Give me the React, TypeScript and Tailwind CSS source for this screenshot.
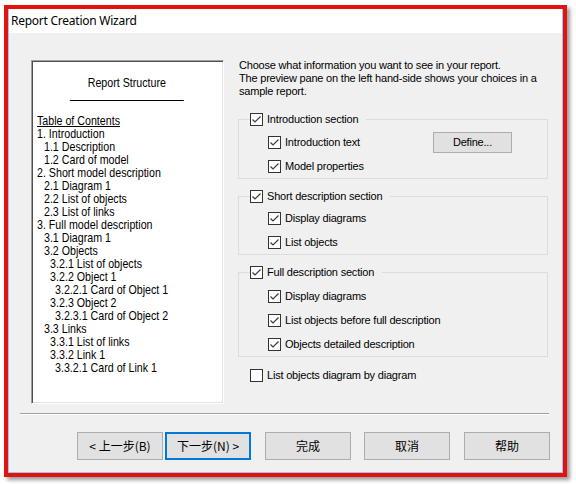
import React from 'react';

const toc = [
  { text: 'Table of Contents', level: 0, underline: true },
  { text: '1. Introduction', level: 0 },
  { text: '1.1 Description', level: 1 },
  { text: '1.2 Card of model', level: 1 },
  { text: '2. Short model description', level: 0 },
  { text: '2.1 Diagram 1', level: 1 },
  { text: '2.2 List of objects', level: 1 },
  { text: '2.3 List of links', level: 1 },
  { text: '3. Full model description', level: 0 },
  { text: '3.1 Diagram 1', level: 1 },
  { text: '3.2 Objects', level: 1 },
  { text: '3.2.1 List of objects', level: 2 },
  { text: '3.2.2 Object 1', level: 2 },
  { text: '3.2.2.1 Card of Object 1', level: 3 },
  { text: '3.2.3 Object 2', level: 2 },
  { text: '3.2.3.1 Card of Object 2', level: 3 },
  { text: '3.3 Links', level: 1 },
  { text: '3.3.1 List of links', level: 2 },
  { text: '3.3.2 Link 1', level: 2 },
  { text: '3.3.2.1 Card of Link 1', level: 3 },
];

// indents are in the unscaled space of the preview text (scaled by 0.82)
const indents = ['pl-0', 'pl-[8.5px]', 'pl-[16px]', 'pl-[22px]'];

function Box({ checked }: { checked: boolean }) {
  return (
    <span className="w-[13px] h-[13px] border border-[#333333] bg-white flex items-center justify-center shrink-0">
      {checked && (
        <svg width="11" height="11" viewBox="0 0 11 11">
          <path d="M1.5 5.5 L4 8 L9.5 2.5" fill="none" stroke="#3c3c3c" strokeWidth="1.2" />
        </svg>
      )}
    </span>
  );
}

function Check({ label, checked = true }: { label: string; checked?: boolean }) {
  return (
    <label className="flex items-center gap-[4px] h-[13px] leading-[13px] whitespace-nowrap">
      <Box checked={checked} />
      <span>{label}</span>
    </label>
  );
}

function Row({ children }: { children: React.ReactNode }) {
  return <div className="h-[24px] flex items-center">{children}</div>;
}

export default function App() {
  const btn =
    "h-[28px] w-[86px] bg-[#e1e1e1] border border-[#adadad] text-[12px] text-black flex items-center justify-center";

  return (
    <div className="w-[576px] h-[484px] bg-white pt-[5px] pl-[4px] font-['Noto_Sans_CJK_SC',sans-serif]">
      <div className="w-[563px] h-[472px] border-4 border-[#e2120e] shadow-[3px_3px_4px_rgba(0,0,0,0.4)] flex flex-col">
        <div className="flex-1 flex flex-col border-x border-b border-[#9cc4ee]">
          {/* Title bar */}
          <div className="h-[24px] bg-white flex items-center pl-[2px] text-[12px] tracking-[-0.25px] text-black font-['Noto_Sans',sans-serif]">
            Report Creation Wizard
          </div>

          {/* Body */}
          <div className="flex-1 bg-[#f0f0f0] pt-[26px] text-black">
            <div className="flex items-start pl-[22px] gap-[14px]">
              {/* Preview pane */}
              <div className="mt-[1px] w-[193px] h-[344px] overflow-hidden bg-white border border-t-[#a0a0a0] border-l-[#a0a0a0] border-r-white border-b-white shadow-[inset_1px_1px_0_#505050,inset_-1px_-1px_0_#e3e3e3] pl-[5px] pt-[15px]">
                <div className="w-[219px] origin-top-left scale-x-[0.82] text-[13px] leading-[13px] font-['Liberation_Sans',sans-serif]">
                  <div className="text-center">Report Structure</div>
                  <div className="mt-[11px] mx-auto w-[139px] h-px bg-black" />
                  <div className="mt-[13px]">
                    {toc.map((item, i) => (
                      <div key={i} className={`h-[13px] whitespace-nowrap ${indents[item.level]}`}>
                        <span className={item.underline ? 'underline' : ''}>{item.text}</span>
                      </div>
                    ))}
                  </div>
                </div>
              </div>

              {/* Options */}
              <div className="w-[310px] text-[11px] leading-[13px] tracking-[-0.2px] font-['Liberation_Sans',sans-serif]">
                <p className="pl-[1px]">
                  Choose what information you want to see in your report.
                  <br />
                  The preview pane on the left hand-side shows your choices in a
                  <br />
                  sample report.
                </p>

                <fieldset className="mt-[15px] border border-[#dcdcdc]">
                  <legend className="ml-[11px] pr-[8px]">
                    <Check label="Introduction section" />
                  </legend>
                  <div className="pt-[4px] pl-[29px]">
                    <Row>
                      <Check label="Introduction text" />
                      <button className="ml-auto mr-[35px] w-[79px] h-[21px] bg-[#e1e1e1] border border-[#adadad] text-[11px]">
                        Define...
                      </button>
                    </Row>
                    <Row>
                      <Check label="Model properties" />
                    </Row>
                  </div>
                </fieldset>

                <fieldset className="mt-[11px] border border-[#dcdcdc]">
                  <legend className="ml-[11px] pr-[8px]">
                    <Check label="Short description section" />
                  </legend>
                  <div className="pt-[3px] pl-[29px]">
                    <Row>
                      <Check label="Display diagrams" />
                    </Row>
                    <Row>
                      <Check label="List objects" />
                    </Row>
                  </div>
                </fieldset>

                <fieldset className="mt-[11px] border border-[#dcdcdc]">
                  <legend className="ml-[11px] pr-[8px]">
                    <Check label="Full description section" />
                  </legend>
                  <div className="pt-[5px] pl-[29px]">
                    <Row>
                      <Check label="Display diagrams" />
                    </Row>
                    <Row>
                      <Check label="List objects before full description" />
                    </Row>
                    <Row>
                      <Check label="Objects detailed description" />
                    </Row>
                  </div>
                </fieldset>

                <div className="mt-[12px] pl-[12px]">
                  <Check label="List objects diagram by diagram" checked={false} />
                </div>
              </div>
            </div>

            {/* Separator */}
            <div className="mt-[9px] ml-[11px] w-[529px] border-t border-[#a0a0a0] border-b border-b-white" />

            {/* Buttons */}
            <div className="mt-[17px] flex justify-end pr-[12px]">
              <button className={btn}>&lt; 上一步(B)</button>
              <button className="ml-[2px] h-[28px] w-[86px] bg-[#e1e1e1] border-2 border-[#0078d7] text-[12px] text-black flex items-center justify-center">
                下一步(N) &gt;
              </button>
              <button className={`${btn} ml-[14px]`}>完成</button>
              <button className={`${btn} ml-[13px]`}>取消</button>
              <button className={`${btn} ml-[14px]`}>帮助</button>
            </div>
          </div>
        </div>
      </div>
    </div>
  );
}
